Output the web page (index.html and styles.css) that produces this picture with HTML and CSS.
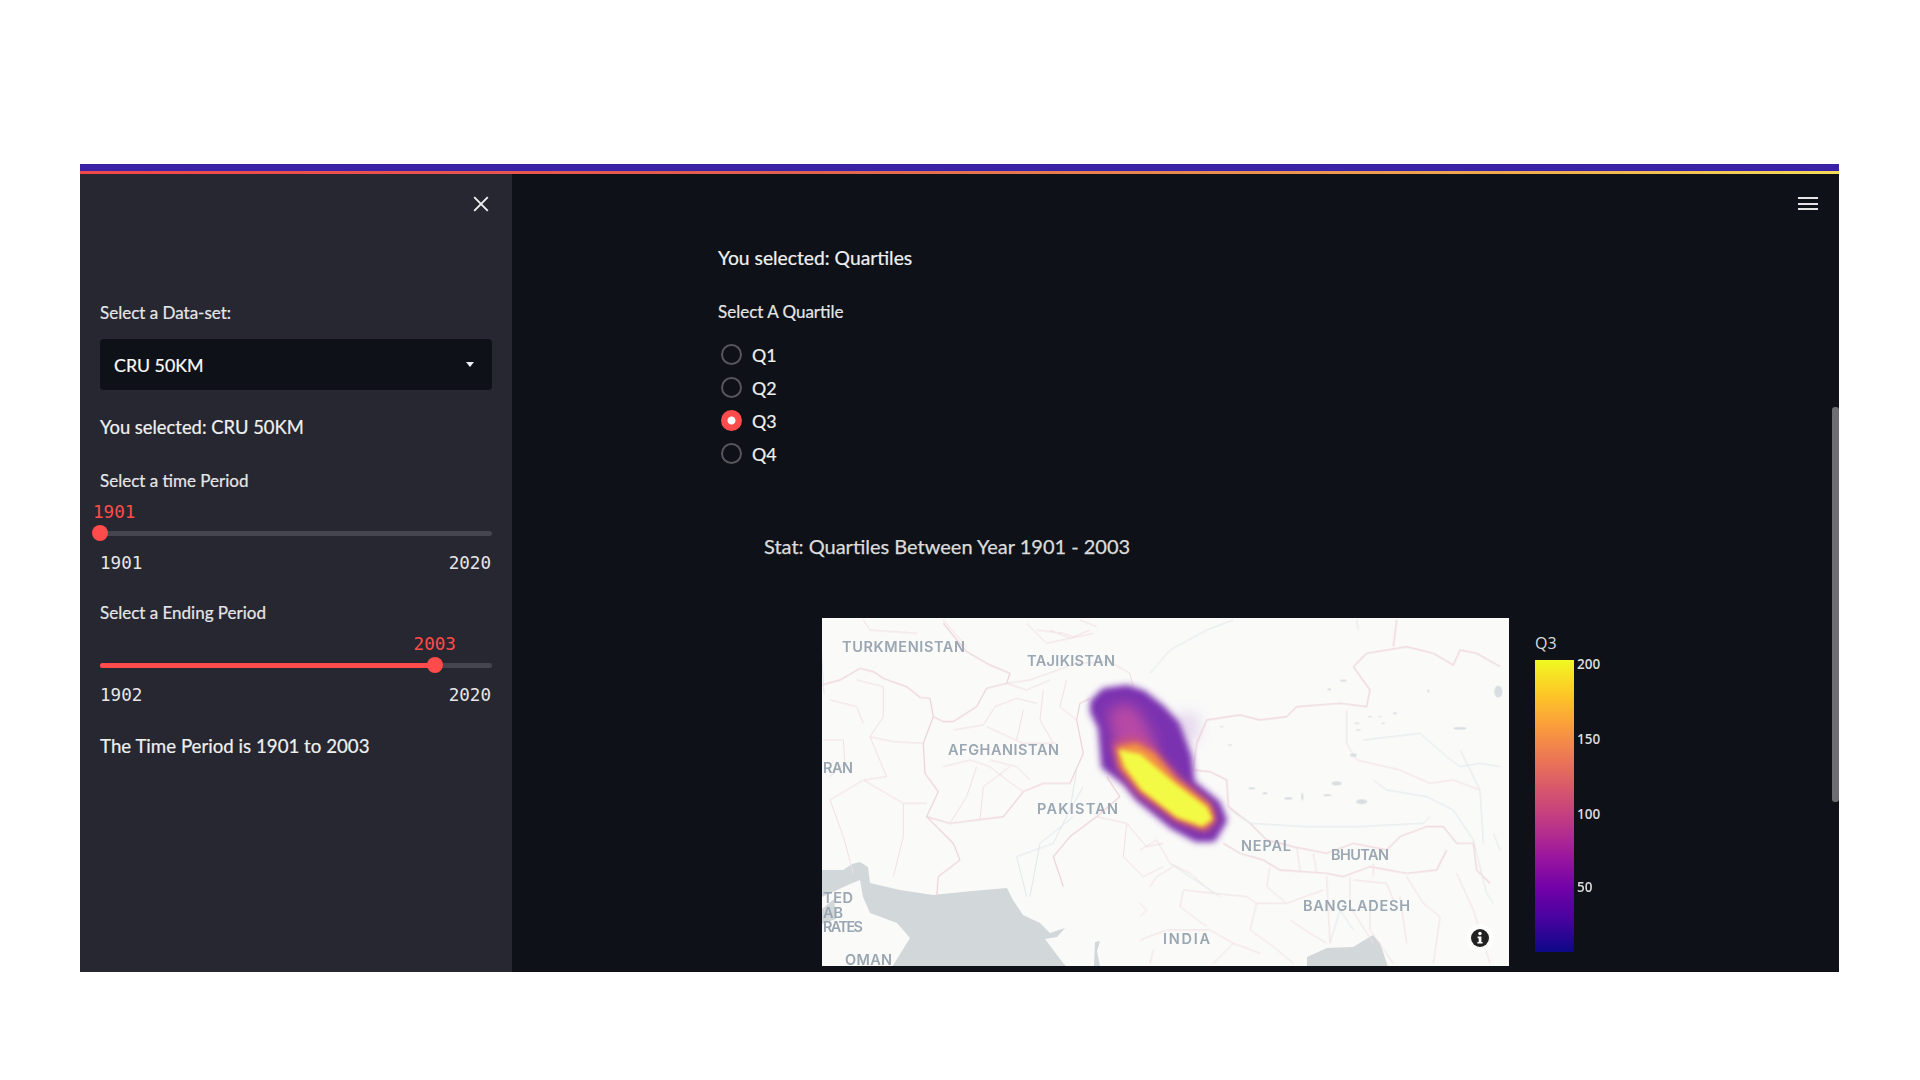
FILE: index.html
```html
<!DOCTYPE html>
<html lang="en">
<head>
<meta charset="utf-8">
<title>Quartiles</title>
<link rel="stylesheet" href="styles.css">
</head>
<body>
<div class="app">
  <div class="topbar"><div class="topbar-fill"></div><div class="topbar-line"></div></div>
  <div class="shell">
    <aside class="sidebar">
      <div class="close-row">
        <svg class="close-icon" viewBox="0 0 16 16"><path d="M1.2 1.2L14.8 14.8M14.8 1.2L1.2 14.8"/></svg>
      </div>
      <div class="label label-first">Select a Data-set:</div>
      <div class="select"><span>CRU 50KM</span><span class="caret"></span></div>
      <p class="text text-selected">You selected: CRU 50KM</p>

      <div class="label">Select a time Period</div>
      <div class="slider">
        <div class="value-row"><span class="value value-start">1901</span></div>
        <div class="track-box">
          <div class="track"></div>
          <div class="thumb" style="left:0%"></div>
        </div>
        <div class="ticks"><span>1901</span><span>2020</span></div>
      </div>

      <div class="label">Select a Ending Period</div>
      <div class="slider">
        <div class="value-row"><span class="value" style="left:85.4%">2003</span></div>
        <div class="track-box">
          <div class="track"><div class="fill" style="width:85.4%"></div></div>
          <div class="thumb" style="left:85.4%"></div>
        </div>
        <div class="ticks"><span>1902</span><span>2020</span></div>
      </div>

      <p class="text text-period">The Time Period is 1901 to 2003</p>
    </aside>

    <main class="main">
      <div class="menu"><i></i><i></i><i></i></div>
      <div class="scrollbar"></div>

      <p class="text text-quartiles">You selected: Quartiles</p>
      <div class="label">Select A Quartile</div>
      <div class="radios">
        <div class="radio"><span class="dot"></span>Q1</div>
        <div class="radio"><span class="dot"></span>Q2</div>
        <div class="radio"><span class="dot dot-on"></span>Q3</div>
        <div class="radio"><span class="dot"></span>Q4</div>
      </div>
      <div class="stat">Stat: Quartiles Between Year 1901 - 2003</div>

      <div class="chart">
        <svg class="map" viewBox="0 -1 687 348">
          <defs>
            <filter id="b05"><feGaussianBlur stdDeviation="0.5"/></filter>
            <filter id="b2"><feGaussianBlur stdDeviation="2"/></filter>
            <filter id="b3"><feGaussianBlur stdDeviation="3"/></filter>
            <filter id="b4" x="-30%" y="-30%" width="160%" height="160%"><feGaussianBlur stdDeviation="4"/></filter>
            <filter id="b7" x="-50%" y="-50%" width="200%" height="200%"><feGaussianBlur stdDeviation="7"/></filter>
          </defs>
          <rect class="land" y="-1" width="687" height="348"/>
          <g filter="url(#b05)">
            <path class="sea" d="M0 251L21 251L30 245L38 243L46 248L48 264L78 271L111 276L150 272L185 269L191 281L201 296L218 304L228 314L243 309L235 318L223 320L241 344L245 348L70 348L88 319L75 304L48 294L41 278L38 261L28 265L0 278Z"/>
            <path class="sea" d="M273 323L278 322L275 332L278 347L272 347Z"/>
            <path class="sea" d="M485 338L505 329L531 328L551 316L558 324L566 348L485 348Z"/>
            <path class="sea" d="M0 290L12 280L14 300L0 305Z"/>
            <g transform="translate(-12,-9) scale(0.3333)" class="lines">
              <path class="border" d="M35 225L90 210L150 175L190 185L220 205L290 230L330 262L360 265L370 320L400 335L430 335L500 290L530 235L590 220L600 190L540 165L470 125L400 40"/>
              <path class="border" d="M370 320L340 400L345 490L385 545L350 620L420 640L580 620L640 545L700 520L780 520L820 430L800 330L810 280L840 265"/>
              <path class="border" d="M350 620L430 700L450 750L385 800L380 860"/>
              <path class="border" d="M890 500L930 560L860 620L780 680L730 740L760 830"/>
              <path class="faint" d="M430 360L520 345L555 290L620 265L680 280M530 350L640 400L740 400M500 470L470 560L420 640M600 470L520 530L510 630M540 450L620 470L660 510M640 300L620 390M700 240L690 330L730 400M590 220L650 240L720 210M140 210L220 230L220 320L180 380L230 500L160 510L60 570L100 680L130 790M280 580L280 680L250 800M160 510L280 580L350 580M40 390L100 390L105 460L60 500M160 30L180 60L320 70M400 30L470 110M650 40L710 100L850 70M590 220L660 210L800 160L900 155L960 190L970 230M680 60L760 70L790 80M340 400L250 395L180 380M640 545L590 510L540 470L480 450L400 470M720 60L780 85L840 60M810 30L860 50M770 210L750 290L800 330M60 270L140 290L160 340M860 620L950 640L1010 710L1060 700M950 640L940 740L1000 800L1060 770"/>
              <path class="river" d="M800 480L780 600L730 700L620 740L650 860M660 860L690 700L790 620M35 130L42 250M820 530L780 600"/>
            </g>
            <g transform="translate(318,-9) scale(0.3333)" class="lines">
              <path class="border" d="M640 170L680 130L800 110L880 130L940 165L960 120L1010 130L1080 170M770 30L760 110"/>
              <path class="border" d="M640 170L690 240L680 290L600 280L470 290L440 320L360 330L300 315L200 330L170 400L160 480L210 485L260 510L265 590L330 640L380 690L460 710L560 730L640 700L740 720L780 680L860 650L910 650L950 700L1000 700L1010 780L1050 820"/>
              <path class="border" d="M250 700L300 730L370 750L420 780L560 790L610 800L690 770L800 790L890 780L920 720"/>
              <path class="faint" d="M0 720L50 690L90 760L150 790L220 850L320 860L350 880L440 880L550 840M30 830L50 800L100 770M130 840L220 850M0 990L80 960L210 960L280 1000L220 1060M390 770L380 830L440 880M450 930L510 970L560 1000M560 800L570 1000M630 800L630 890L700 1000M690 880L690 960L760 1060M780 860L800 1000M900 920L880 1060M1000 900L1050 1060M620 300L620 400L650 450L780 480L870 520L940 510L1020 540M0 880L20 900L0 920M470 710L480 780M520 730L530 790M640 810L740 820L760 870M800 800L850 880L900 920M950 790L1000 900M350 880L330 960L400 1010L460 1060M130 840L120 890L200 950M280 1000L360 1030M40 1020L30 1060M700 760L700 800"/>
              <path class="river" d="M30 190L90 120L200 60L280 30M700 510L740 540L860 560L940 600L1000 690L1040 850L1060 880M270 600L330 640L500 650L650 650L850 640L870 620M960 420L1020 540L1030 700M670 390L840 370L920 440L960 470L1020 460L1080 470M650 30L655 60M1060 670L1080 720M90 760L240 860M570 1000L600 900L640 960"/>
              <g class="lakes">
                <ellipse cx="1075" cy="245" rx="12" ry="18"/><ellipse cx="610" cy="212" rx="10" ry="3"/><ellipse cx="568" cy="238" rx="6" ry="3"/>
                <ellipse cx="590" cy="520" rx="15" ry="6"/><ellipse cx="665" cy="575" rx="16" ry="7"/><ellipse cx="445" cy="565" rx="12" ry="4"/>
                <ellipse cx="487" cy="560" rx="3" ry="12"/><ellipse cx="375" cy="550" rx="8" ry="3"/><ellipse cx="335" cy="535" rx="10" ry="3"/>
                <ellipse cx="960" cy="355" rx="20" ry="4"/><ellipse cx="650" cy="340" rx="8" ry="2"/><ellipse cx="655" cy="360" rx="8" ry="2"/>
                <ellipse cx="690" cy="320" rx="7" ry="2"/><ellipse cx="720" cy="320" rx="5" ry="2"/><ellipse cx="730" cy="340" rx="6" ry="2"/>
                <ellipse cx="765" cy="310" rx="6" ry="3"/><ellipse cx="640" cy="435" rx="10" ry="5"/><ellipse cx="270" cy="405" rx="7" ry="2"/>
                <ellipse cx="245" cy="350" rx="6" ry="2"/><ellipse cx="865" cy="243" rx="3" ry="4"/><ellipse cx="562" cy="555" rx="12" ry="3"/>
              </g>
            </g>
          </g>

          <g class="labels">
            <text x="20" y="33" textLength="123">TURKMENISTAN</text>
            <text x="205" y="47" textLength="88">TAJIKISTAN</text>
            <text x="126" y="136" textLength="111">AFGHANISTAN</text>
            <text x="1" y="154" textLength="30">RAN</text>
            <text x="215" y="195" textLength="81">PAKISTAN</text>
            <text x="419" y="232" textLength="50">NEPAL</text>
            <text x="509" y="241" textLength="58">BHUTAN</text>
            <text x="481" y="292" textLength="107">BANGLADESH</text>
            <text x="341" y="325" textLength="47">INDIA</text>
            <text x="1" y="284" textLength="30">TED</text>
            <text x="1" y="299">AB</text>
            <text x="1" y="313" textLength="40">RATES</text>
            <text x="23" y="345.5" textLength="47">OMAN</text>
          </g>

          <g class="heat">
            <path class="h-halo" filter="url(#b7)" d="M352 95L376 95L376 120L362 128Z"/>
            <path class="h-purple" filter="url(#b3)" d="M273 84L283 74L305 71L320 76L338 90L353 106L365 138L368 165L394 186L400 201L390 218L375 218L351 205L318 178L305 162L284 146L281 108L273 92Z"/>
            <path class="h-magenta" filter="url(#b7)" d="M286 90L308 84L322 100L334 126L326 146L296 138L290 112Z"/>
            <path class="h-pink" filter="url(#b4)" d="M292 124L312 118L332 130L356 158L388 186L394 201L384 212L355 202L316 174L296 148Z"/>
            <path class="h-orange" filter="url(#b3)" d="M294 128L314 124L332 134L354 160L388 186L392 201L382 210L355 200L318 172L298 148Z"/>
            <path class="h-yellow" filter="url(#b2)" d="M298 132L318 136L351 164L384 189L389 200L380 206L355 197L320 170L304 148Z"/>
          </g>

          <circle class="info-halo" cx="658" cy="319" r="14"/>
          <circle class="info-disc" cx="658" cy="319" r="9"/>
          <circle class="info-i" cx="658" cy="314.5" r="1.7"/>
          <path class="info-i" d="M655.6 317.6H659.4V323H660.6V324.6H655.4V323H656.7V319.2H655.6Z"/>
        </svg>

        <div class="legend">
          <div class="legend-title">Q3</div>
          <div class="legend-body">
            <div class="colorbar"></div>
            <span class="legend-tick" style="top:1.4%">200</span>
            <span class="legend-tick" style="top:26.9%">150</span>
            <span class="legend-tick" style="top:52.6%">100</span>
            <span class="legend-tick" style="top:77.7%">50</span>
          </div>
        </div>
      </div>
    </main>
  </div>
</div>
</body>
</html>
```

FILE: styles.css
```css
* { box-sizing: border-box; }
html, body { margin: 0; padding: 0; background: #fff; }
body { font-family: "Lato", "Noto Sans", sans-serif; color: #fafafa; height: 1080px; overflow: hidden; }

.app { margin: 164px 81px 0 79.5px; height: 808px; display: flex; flex-direction: column; overflow: hidden; background: #0e1117; }
.topbar { height: 10px; flex: none; display: flex; flex-direction: column; }
.topbar-fill { height: 7px; background: #3a22a6; }
.topbar-line { height: 3px; background: linear-gradient(90deg, #f0484a 0%, #e0604f 40%, #f2b24f 85%, #f5dc58 100%); }
.shell { flex: 1; display: flex; min-height: 0; }

.sidebar { width: 432.5px; flex: none; background: #262730; padding: 22px 20px 0 20.5px; }
.close-row { display: flex; justify-content: flex-end; height: 16px; padding-right: 3px; }
.close-icon { width: 16px; height: 16px; fill: none; stroke: #f0f0f0; stroke-width: 1.9; }

.label { font-size: 17px; line-height: 24px; height: 24px; margin-top: 28px; color: #e6e6e8; -webkit-text-stroke: 0.2px #e6e6e8; }
.label-first { margin-top: 89px; }
.select { margin-top: 14px; height: 51px; border-radius: 4px; background: #0e1117; padding: 0 14px; display: flex; align-items: center; justify-content: space-between; font-size: 17.8px; -webkit-text-stroke: 0.2px #fafafa; }
.caret { width: 0; height: 0; border-left: 4.5px solid transparent; border-right: 4.5px solid transparent; border-top: 5px solid #f0f0f0; margin-right: 4px; }
.text { margin: 0; font-size: 18.7px; line-height: 28px; height: 28px; color: #f0f0f0; -webkit-text-stroke: 0.2px #f0f0f0; }
.text-selected { margin-top: 23px; font-size: 18.4px; }
.text-period { margin-top: 27px; }
.text-quartiles { font-size: 19.3px; }

.slider { margin-top: 8px; }
.value-row { position: relative; height: 22px; }
.value { position: absolute; top: 0; transform: translateX(-50%); font-family: "DejaVu Sans Mono", monospace; font-size: 17.6px; line-height: 22px; color: #ff4b4b; }
.value-start { left: -7px; transform: none; }
.track-box { position: relative; height: 16px; margin-top: 2px; display: flex; align-items: center; }
.track { width: 100%; height: 5px; border-radius: 3px; background: #44454f; overflow: hidden; }
.fill { height: 100%; background: #ff4b4b; }
.thumb { position: absolute; top: 0; width: 16px; height: 16px; margin-left: -8px; border-radius: 50%; background: #ff4b4b; }
.ticks { display: flex; justify-content: space-between; margin-top: 11px; padding-right: 1px; font-family: "DejaVu Sans Mono", monospace; font-size: 17.6px; line-height: 22px; height: 21px; color: #e6e6e8; }

.main { position: relative; flex: 1; padding: 70px 0 0 206px; min-width: 0; }
.menu { position: absolute; top: 23px; right: 21px; width: 20px; display: flex; flex-direction: column; gap: 3.5px; }
.menu i { display: block; height: 2px; background: #e4e4e4; }
.scrollbar { position: absolute; top: 233px; right: 0; width: 7px; height: 395px; border-radius: 3px; background: #6c6e72; }

.radios { margin-top: 14px; }
.radio { height: 33px; display: flex; align-items: center; gap: 10px; margin-left: 3px; font-size: 17.8px; color: #f0f0f0; -webkit-text-stroke: 0.2px #f0f0f0; }
.dot { width: 21px; height: 21px; border-radius: 50%; border: 2.5px solid #55575c; background: #0e1117; display: block; }
.dot-on { border: 0; background: radial-gradient(circle, #fff 0 3.5px, #ff4b4b 4.5px); }

.stat { margin: 61px 0 0 46px; font-size: 20px; line-height: 30px; height: 30px; color: #dcdcdc; -webkit-text-stroke: 0.25px #dcdcdc; }

.chart { display: flex; margin: 57px 0 0 104px; }
.map { display: block; width: 687px; height: 348px; flex: none; }
.land { fill: #fafaf9; }
.sea { fill: #d2d7da; }
.lines path { fill: none; vector-effect: non-scaling-stroke; stroke-linejoin: round; }
.border { stroke: #eed2d6; stroke-width: 1.2; }
.faint { stroke: #f2dfe1; stroke-width: 1; }
.river { stroke: #e1e7eb; stroke-width: 1; }
.lakes { fill: #d8dde0; }
.labels text { font-family: "Inter", "Noto Sans", sans-serif; font-size: 14.5px; font-weight: 600; fill: #9aa7b2; }
.h-halo { fill: #c7a3de; opacity: 0.4; }
.h-purple { fill: #7a30b0; stroke: #7a30b0; stroke-width: 10; stroke-linejoin: round; }
.h-magenta { fill: #b84aa6; }
.h-pink { fill: #c9507f; stroke: #c9507f; stroke-width: 2; }
.h-orange { fill: #f5963f; }
.h-yellow { fill: #f3fa45; stroke: #f3fa45; stroke-width: 2; stroke-linejoin: round; }
.info-halo { fill: #ffffff; opacity: 0.7; }
.info-disc { fill: #222; }
.info-i { fill: #fff; }

.legend { margin-left: 26px; padding-top: 16px; font-family: "Open Sans", sans-serif; color: #dcdcdc; }
.legend-title { font-size: 16px; line-height: 18px; height: 18px; }
.legend-body { position: relative; margin-top: 8px; height: 292px; width: 80px; }
.colorbar { width: 39px; height: 100%; background: linear-gradient(180deg, #f0f921 0%, #fdca26 11%, #fb9f3a 22%, #ed7953 33%, #d8576b 44%, #bd3786 56%, #9c179e 67%, #7201a8 78%, #46039f 89%, #0d0887 100%); }
.legend-tick { position: absolute; left: 42px; font-size: 13.5px; font-weight: 600; line-height: 14px; transform: translateY(-50%); }
```
